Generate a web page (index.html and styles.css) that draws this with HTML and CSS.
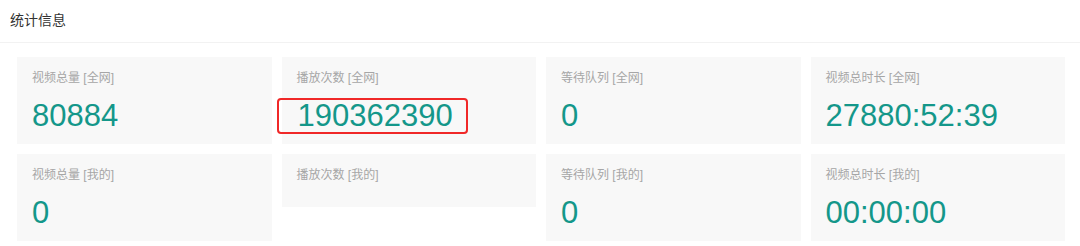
FILE: index.html
```html
<!DOCTYPE html>
<html lang="zh-CN">
<head>
<meta charset="utf-8">
<title>统计信息</title>
<link rel="stylesheet" href="styles.css">
</head>
<body>
<div class="panel">
  <div class="panel-header">统计信息</div>
  <div class="stats">
    <div class="card"><div class="label">视频总量 [全网]</div><div class="value">80884</div></div>
    <div class="card"><div class="label">播放次数 [全网]</div><div class="value"><span class="mark">190362390</span></div></div>
    <div class="card"><div class="label">等待队列 [全网]</div><div class="value">0</div></div>
    <div class="card"><div class="label">视频总时长 [全网]</div><div class="value">27880:52:39</div></div>
    <div class="card"><div class="label">视频总量 [我的]</div><div class="value">0</div></div>
    <div class="card"><div class="label">播放次数 [我的]</div><div class="value"></div></div>
    <div class="card"><div class="label">等待队列 [我的]</div><div class="value">0</div></div>
    <div class="card"><div class="label">视频总时长 [我的]</div><div class="value">00:00:00</div></div>
  </div>
</div>
</body>
</html>
```
FILE: styles.css
```css
html, body {
  margin: 0;
  padding: 0;
  background: #ffffff;
}
body {
  font-family: "Liberation Sans", "Noto Sans CJK SC", sans-serif;
  color: #333333;
}
.panel-header {
  height: 42px;
  line-height: 40px;
  padding-left: 10px;
  font-size: 14px;
  color: #333333;
  border-bottom: 1px solid #f2f2f2;
}
.stats {
  display: grid;
  grid-template-columns: repeat(4, 1fr);
  column-gap: 10px;
  row-gap: 10px;
  align-items: start;
  padding: 14px 15px 0 17px;
}
.card {
  background: #f8f8f8;
  padding: 12px 15px 11px 15px;
}
.label {
  font-size: 12px;
  line-height: 18px;
  color: #a6a6a6;
}
.value {
  margin-top: 12px;
  font-size: 31px;
  line-height: 34px;
  color: #14978a;
}
.value:empty {
  height: 0;
}
.mark {
  position: relative;
  display: inline-block;
  margin-left: 1px;
}
.mark::after {
  content: "";
  position: absolute;
  left: -21px;
  right: -15px;
  top: -1px;
  bottom: -1px;
  border: 2px solid #f02828;
  border-radius: 4px;
}
```
